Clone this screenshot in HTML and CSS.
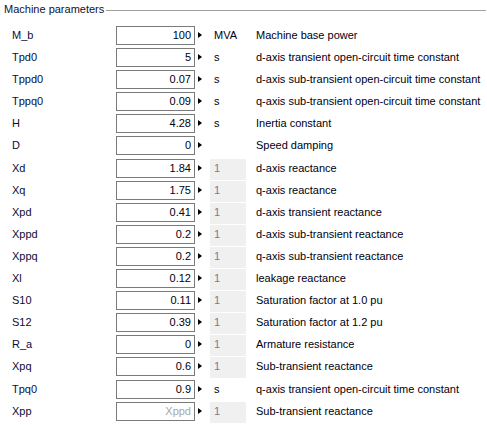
FILE: index.html
```html
<!DOCTYPE html>
<html>
<head>
<meta charset="utf-8">
<link rel="stylesheet" href="styles.css">
</head>
<body>
<div class="panel">
  <div class="legend"><span class="legend-title">Machine parameters</span><span class="legend-line"></span></div>
  <div class="rows">
    <div class="row"><span class="label">M_b</span><span class="field">100</span><span class="arrow"></span><span class="unit">MVA</span><span class="desc">Machine base power</span></div>
    <div class="row"><span class="label">Tpd0</span><span class="field">5</span><span class="arrow"></span><span class="unit">s</span><span class="desc">d-axis transient open-circuit time constant</span></div>
    <div class="row"><span class="label">Tppd0</span><span class="field">0.07</span><span class="arrow"></span><span class="unit">s</span><span class="desc">d-axis sub-transient open-circuit time constant</span></div>
    <div class="row"><span class="label">Tppq0</span><span class="field">0.09</span><span class="arrow"></span><span class="unit">s</span><span class="desc">q-axis sub-transient open-circuit time constant</span></div>
    <div class="row"><span class="label">H</span><span class="field">4.28</span><span class="arrow"></span><span class="unit">s</span><span class="desc">Inertia constant</span></div>
    <div class="row"><span class="label">D</span><span class="field">0</span><span class="arrow"></span><span class="unit"></span><span class="desc">Speed damping</span></div>
    <div class="row"><span class="label">Xd</span><span class="field">1.84</span><span class="arrow"></span><span class="unit pu">1</span><span class="desc">d-axis reactance</span></div>
    <div class="row"><span class="label">Xq</span><span class="field">1.75</span><span class="arrow"></span><span class="unit pu">1</span><span class="desc">q-axis reactance</span></div>
    <div class="row"><span class="label">Xpd</span><span class="field">0.41</span><span class="arrow"></span><span class="unit pu">1</span><span class="desc">d-axis transient reactance</span></div>
    <div class="row"><span class="label">Xppd</span><span class="field">0.2</span><span class="arrow"></span><span class="unit pu">1</span><span class="desc">d-axis sub-transient reactance</span></div>
    <div class="row"><span class="label">Xppq</span><span class="field">0.2</span><span class="arrow"></span><span class="unit pu">1</span><span class="desc">q-axis sub-transient reactance</span></div>
    <div class="row"><span class="label">Xl</span><span class="field">0.12</span><span class="arrow"></span><span class="unit pu">1</span><span class="desc">leakage reactance</span></div>
    <div class="row"><span class="label">S10</span><span class="field">0.11</span><span class="arrow"></span><span class="unit pu">1</span><span class="desc">Saturation factor at 1.0 pu</span></div>
    <div class="row"><span class="label">S12</span><span class="field">0.39</span><span class="arrow"></span><span class="unit pu">1</span><span class="desc">Saturation factor at 1.2 pu</span></div>
    <div class="row"><span class="label">R_a</span><span class="field">0</span><span class="arrow"></span><span class="unit pu">1</span><span class="desc">Armature resistance</span></div>
    <div class="row"><span class="label">Xpq</span><span class="field">0.6</span><span class="arrow"></span><span class="unit pu">1</span><span class="desc">Sub-transient reactance</span></div>
    <div class="row"><span class="label">Tpq0</span><span class="field">0.9</span><span class="arrow"></span><span class="unit">s</span><span class="desc">q-axis transient open-circuit time constant</span></div>
    <div class="row"><span class="label">Xpp</span><span class="field placeholder">Xppd</span><span class="arrow"></span><span class="unit pu">1</span><span class="desc">Sub-transient reactance</span></div>
  </div>
</div>
</body>
</html>
```

FILE: styles.css
```css
html, body {
  margin: 0;
  padding: 0;
  background: #ffffff;
}

body {
  font-family: "Liberation Sans", Arial, sans-serif;
  font-size: 11px;
  color: #000000;
}

.panel {
  width: 487px;
  height: 425px;
  overflow: hidden;
}

.legend {
  display: flex;
  align-items: center;
  height: 19px;
  padding-left: 4px;
  padding-right: 1px;
}

.legend-title {
  color: #101030;
  padding-right: 2px;
  line-height: 13px;
}

.legend-line {
  flex: 1;
  border-top: 1px solid #a0a0a0;
  margin-top: 1px;
}

.rows {
  padding-top: 5px;
}

.row {
  display: grid;
  grid-template-columns: 104px 79px 15px 36px 1fr;
  align-items: start;
  height: 22.1px;
  padding-left: 12px;
}

.label {
  color: #0c0c34;
  line-height: 19px;
  margin-top: 2px;
}

.field {
  box-sizing: border-box;
  height: 19px;
  margin-top: 2px;
  border: 1px solid #7a7a7a;
  text-align: right;
  padding-right: 3px;
  line-height: 17px;
  color: #000010;
}

.field.placeholder {
  color: #a8a8a8;
}

.arrow {
  width: 0;
  height: 0;
  margin-top: 8px;
  margin-left: 3px;
  border-left: 4px solid #000000;
  border-top: 3.5px solid transparent;
  border-bottom: 3.5px solid transparent;
}

.unit {
  height: 21px;
  margin-top: 2px;
  padding-left: 4px;
  line-height: 19px;
  color: #000010;
}

.unit.pu {
  background: #f0f0f0;
  color: #7a7a94;
}

.desc {
  padding-left: 10px;
  line-height: 19px;
  margin-top: 2px;
  white-space: nowrap;
  color: #000010;
}
```
